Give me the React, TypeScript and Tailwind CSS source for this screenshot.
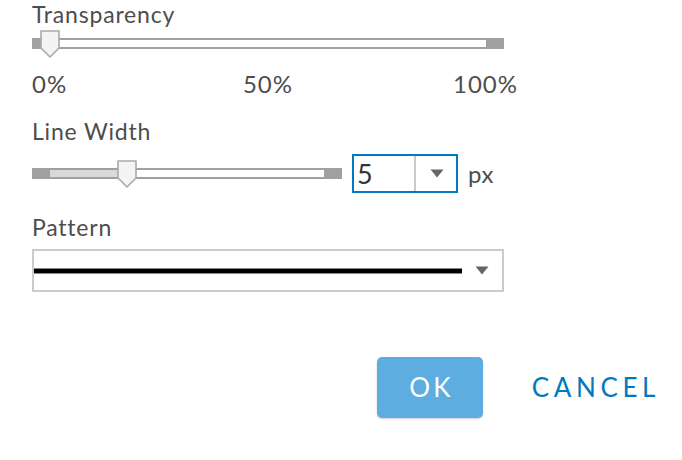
import React from "react";

function Thumb({ left, top }: { left: number; top: number }) {
  return (
    <svg
      className="absolute"
      style={{ left, top }}
      width="20"
      height="28"
      viewBox="0 0 20 28"
    >
      <path
        d="M1 1 H19 V18 L10 27 L1 18 Z"
        fill="#f3f4f5"
        stroke="#a9a9a9"
        strokeWidth="1.6"
        strokeLinejoin="round"
      />
    </svg>
  );
}

function Caret({ className }: { className?: string }) {
  return (
    <svg className={className} width="14" height="9" viewBox="0 0 14 9">
      <path d="M0.5 0.5 H13.5 L7 8.5 Z" fill="#666" />
    </svg>
  );
}

export default function App() {
  return (
    <div className="w-[682px] h-[460px] bg-white pl-[32px] font-['Lato',sans-serif] text-[#4d4d4d] overflow-hidden">
      <div className="mt-[1px] h-[26px] leading-[26px] text-[23px] tracking-[0.8px]">Transparency</div>

      {/* transparency slider */}
      <div className="relative mt-[3px] h-[27px] w-[472px]">
        <div className="absolute left-0 right-0 top-[8px] h-[11px] border-y-2 border-[#a0a0a0] bg-white">
          <div className="absolute left-0 -top-[2px] h-[11px] w-[10px] bg-[#a0a0a0]" />
          <div className="absolute right-0 -top-[2px] h-[11px] w-[18px] bg-[#a0a0a0]" />
        </div>
        <Thumb left={8} top={0} />
      </div>

      <div className="mt-[14px] grid w-[472px] grid-cols-[1fr_auto_1fr] h-[26px] leading-[26px] text-[24px] tracking-[1px]">
        <span>0%</span>
        <span>50%</span>
        <span className="justify-self-end -mr-[14px]">100%</span>
      </div>

      <div className="mt-[21px] h-[26px] leading-[26px] text-[23px] tracking-[0.8px]">Line Width</div>

      <div className="mt-[10px] flex items-center h-[39px]">
        <div className="relative h-[27px] w-[310px]">
          <div className="absolute left-0 right-0 top-[8px] h-[11px] border-y-2 border-[#a0a0a0] bg-white">
            <div className="absolute left-[18px] top-0 h-[7px] w-[70px] bg-[#d9d9d9]" />
            <div className="absolute left-0 -top-[2px] h-[11px] w-[18px] bg-[#a0a0a0]" />
            <div className="absolute right-0 -top-[2px] h-[11px] w-[18px] bg-[#a0a0a0]" />
          </div>
          <Thumb left={85} top={0} />
        </div>
        <div className="ml-[10px] flex h-[39px] w-[106px] border-2 border-[#0079c1]">
          <div className="flex-1 pl-[3px] text-[27px] leading-[35px] text-[#333]">5</div>
          <div className="w-[2px] bg-[#c9c9c9]" />
          <div className="flex w-[40px] items-center justify-center">
            <Caret className="ml-[1px]" />
          </div>
        </div>
        <span className="ml-[10px] text-[24px] leading-[26px] tracking-[0.5px]">px</span>
      </div>

      <div className="mt-[21px] h-[26px] leading-[26px] text-[23px] tracking-[0.8px]">Pattern</div>

      <div className="mt-[9px] flex h-[43px] w-[472px] items-center border-2 border-[#cccccc] bg-white">
        <div className="h-[6px] w-[428px] border-y border-[#8a8a8a] bg-black" />
        <Caret className="ml-[13px]" />
      </div>

      <div className="mt-[65px] flex items-center justify-end pr-[22px]">
        <button className="h-[61px] w-[106px] rounded-[5px] bg-[#5dade0] pl-[3px] text-[26px] tracking-[3px] text-white shadow-[0_1px_2px_rgba(0,0,0,0.2)]">
          OK
        </button>
        <span className="ml-[49px] text-[26px] tracking-[4.6px] text-[#0079c1]">CANCEL</span>
      </div>
    </div>
  );
}
